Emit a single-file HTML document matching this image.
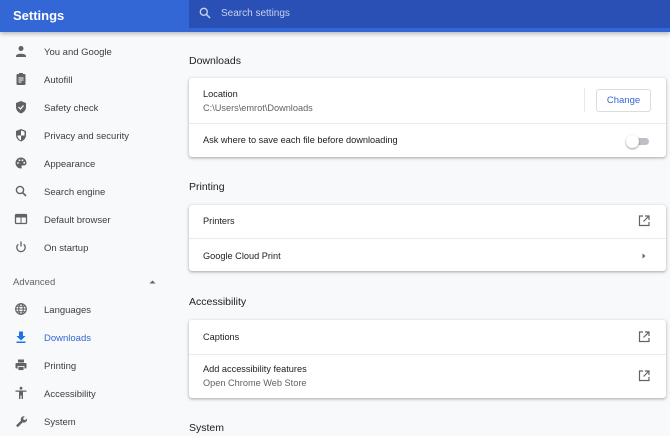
<!DOCTYPE html>
<html><head><style>
*{margin:0;padding:0;box-sizing:border-box}
body{width:670px;height:436px;overflow:hidden;background:#f8f9fa;font-family:"Liberation Sans",sans-serif;position:relative;color:#202124}
.hdr{position:absolute;left:0;top:0;width:670px;height:32px;background:#3367d6;box-shadow:0 2px 4px rgba(0,0,0,.25)}
.hdr .t{position:absolute;left:13px;top:8px;color:#fff;font-size:13px;font-weight:bold}
.search{position:absolute;left:189px;top:0;width:481px;height:28px;background:#2a4fb5;}
.search span{position:absolute;left:32px;top:8px;color:#c5d2f0;font-size:10px}
.nav{position:absolute;left:0;font-size:9.5px;color:#3c4043}
.nav .ic{position:absolute;left:14px;top:-3px;width:14px;height:14px}
.nav .lb{position:absolute;left:44px;top:0;white-space:nowrap}
.h{position:absolute;left:189px;font-size:10.5px;color:#202124}
.card{position:absolute;left:189px;width:477px;background:#fff;border-radius:3px;box-shadow:0 1px 2px rgba(60,64,67,.3),0 1px 3px 1px rgba(60,64,67,.12)}
.row{position:absolute;left:14px;font-size:9.2px;color:#202124}
.sub{color:#5f6368;font-size:9.2px;margin-top:4px}
.sep{position:absolute;left:0;width:477px;height:1px;background:#e8eaed}
svg{display:block}
</style></head><body>
<div class="hdr"><div class="t">Settings</div>
<div class="search"><svg style="position:absolute;left:10px;top:7px" width="12" height="12" viewBox="0 0 12 12"><circle cx="4.8" cy="4.8" r="3.5" fill="none" stroke="#c5d2f0" stroke-width="1.4"/><path d="M7.4 7.4L11 11" stroke="#c5d2f0" stroke-width="1.5"/></svg><span>Search settings</span></div></div>

<div class="nav" style="top:47px"><svg class="ic" viewBox="0 0 14 14"><circle cx="7" cy="4.5" r="2.5" fill="#5f6368"/><path d="M2 12c0-3 10-3 10 0v1H2z" fill="#5f6368"/></svg><span class="lb">You and Google</span></div>
<div class="nav" style="top:75px"><svg class="ic" viewBox="0 0 14 14"><rect x="2.5" y="2" width="9" height="11" rx="1" fill="#5f6368"/><rect x="5" y="1" width="4" height="2" fill="#5f6368"/><path d="M4.5 6h5M4.5 8h5M4.5 10h3" stroke="#fff" stroke-width="1"/></svg><span class="lb">Autofill</span></div>
<div class="nav" style="top:103px"><svg class="ic" viewBox="0 0 14 14"><path d="M7 1l5 2v4c0 3-2 5.5-5 6.5C4 12.5 2 10 2 7V3z" fill="#5f6368"/><path d="M4.5 7l2 2 3-3.5" stroke="#fff" stroke-width="1.2" fill="none"/></svg><span class="lb">Safety check</span></div>
<div class="nav" style="top:131px"><svg class="ic" viewBox="0 0 14 14"><path d="M7 1l5 2v4c0 3-2 5.5-5 6.5C4 12.5 2 10 2 7V3z" fill="#5f6368"/><path d="M7 2.5v5H3.5c0 2 1.5 4 3.5 4.8V7.5h3.5V3.8z" fill="#fff"/></svg><span class="lb">Privacy and security</span></div>
<div class="nav" style="top:159px"><svg class="ic" viewBox="0 0 14 14"><path d="M7 1.5a5.5 5.5 0 000 11c1 0 1-1 .5-1.5s0-1.5 1-1.5H10a2.5 2.5 0 002.5-2.5C12.5 4 10 1.5 7 1.5z" fill="#5f6368"/><circle cx="4" cy="7" r=".9" fill="#fff"/><circle cx="5.5" cy="4.3" r=".9" fill="#fff"/><circle cx="8.5" cy="4.3" r=".9" fill="#fff"/><circle cx="10.2" cy="6.8" r=".9" fill="#fff"/></svg><span class="lb">Appearance</span></div>
<div class="nav" style="top:187px"><svg class="ic" viewBox="0 0 14 14"><circle cx="6" cy="6" r="3.6" fill="none" stroke="#5f6368" stroke-width="1.4"/><path d="M8.6 8.6L12 12" stroke="#5f6368" stroke-width="1.6"/></svg><span class="lb">Search engine</span></div>
<div class="nav" style="top:215px"><svg class="ic" viewBox="0 0 14 14"><rect x="1.5" y="2.5" width="11" height="9" rx="1" fill="none" stroke="#5f6368" stroke-width="1.3"/><rect x="1.5" y="2.5" width="11" height="3" fill="#5f6368"/><path d="M7 5.5v6" stroke="#5f6368"/></svg><span class="lb">Default browser</span></div>
<div class="nav" style="top:243px"><svg class="ic" viewBox="0 0 14 14"><path d="M4.3 4.2a4.2 4.2 0 105.4 0" fill="none" stroke="#5f6368" stroke-width="1.3"/><path d="M7 1.5v5" stroke="#5f6368" stroke-width="1.3"/></svg><span class="lb">On startup</span></div>
<div class="nav" style="top:277px;left:13px;color:#5f6368;font-size:9.5px">Advanced</div>
<svg style="position:absolute;left:149px;top:280px" width="7" height="4" viewBox="0 0 7 4"><path d="M0.5 3.5L3.5 0.5 6.5 3.5z" fill="#5f6368"/></svg>
<div class="nav" style="top:305px"><svg class="ic" viewBox="0 0 14 14"><circle cx="7" cy="7" r="5.3" fill="none" stroke="#5f6368" stroke-width="1.2"/><ellipse cx="7" cy="7" rx="2.3" ry="5.3" fill="none" stroke="#5f6368" stroke-width="1.1"/><path d="M1.7 7h10.6M2.5 4.3h9M2.5 9.7h9" stroke="#5f6368" stroke-width="1"/></svg><span class="lb">Languages</span></div>
<div class="nav" style="top:333px;color:#1a73e8"><svg class="ic" viewBox="0 0 14 14"><path d="M5 1.5h4v4.5h2.5L7 10.5 2.5 6H5z" fill="#1a73e8"/><rect x="2.5" y="11.5" width="9" height="1.5" fill="#1a73e8"/></svg><span class="lb" style="color:#3367d6">Downloads</span></div>
<div class="nav" style="top:361px"><svg class="ic" viewBox="0 0 14 14"><rect x="4" y="1.5" width="6" height="3" fill="#5f6368"/><rect x="1.5" y="5" width="11" height="5.5" rx="1" fill="#5f6368"/><rect x="4" y="8.5" width="6" height="4" fill="#5f6368" stroke="#fff" stroke-width=".8"/></svg><span class="lb">Printing</span></div>
<div class="nav" style="top:389px"><svg class="ic" viewBox="0 0 14 14"><circle cx="7" cy="2.2" r="1.4" fill="#5f6368"/><path d="M1.5 4.5h11v1.3H9V13H7.6V9.5H6.4V13H5V5.8H1.5z" fill="#5f6368"/></svg><span class="lb">Accessibility</span></div>
<div class="nav" style="top:417px"><svg class="ic" viewBox="0 0 14 14"><path d="M2 11.5l5-5a3 3 0 013.8-4L9 4.3l.7 1.3 1.3.7 1.8-1.8a3 3 0 01-4 3.8l-5 5z" fill="#5f6368"/></svg><span class="lb">System</span></div>

<div class="h" style="top:55px">Downloads</div>
<div class="card" style="top:78px;height:79px">
<div class="row" style="top:11px">Location<div class="sub">C:\Users\emrot\Downloads</div></div>
<div style="position:absolute;left:395px;top:10px;width:1px;height:24px;background:#e8eaed"></div>
<div style="position:absolute;left:407px;top:11px;width:55px;height:23px;border:1px solid #dadce0;border-radius:3px;color:#3367d6;font-size:9.5px;text-align:center;line-height:21px">Change</div>
<div class="sep" style="top:45px"></div>
<div class="row" style="top:57px">Ask where to save each file before downloading</div>
<div style="position:absolute;left:440px;top:60px;width:20px;height:7px;border-radius:4px;background:#bdc1c6"></div>
<div style="position:absolute;left:437px;top:57px;width:13px;height:13px;border-radius:50%;background:#fff;box-shadow:0 1px 2px rgba(0,0,0,.4)"></div>
</div>

<div class="h" style="top:181px">Printing</div>
<div class="card" style="top:205px;height:66px">
<div class="row" style="top:11px">Printers</div>
<svg style="position:absolute;left:449px;top:10px" width="12" height="12" viewBox="0 0 12 12"><path d="M5 1H1.5v9.5H11V7" fill="none" stroke="#5f6368" stroke-width="1.2"/><path d="M7 1h4v4M11 1L5.5 6.5" fill="none" stroke="#5f6368" stroke-width="1.2"/></svg>
<div class="sep" style="top:33px"></div>
<div class="row" style="top:46px">Google Cloud Print</div>
<svg style="position:absolute;left:453px;top:48px" width="4" height="6" viewBox="0 0 4 6"><path d="M0.5 0.5L3.5 3 0.5 5.5z" fill="#5f6368"/></svg>
</div>

<div class="h" style="top:296px">Accessibility</div>
<div class="card" style="top:320px;height:78px">
<div class="row" style="top:12px">Captions</div>
<svg style="position:absolute;left:449px;top:11px" width="12" height="12" viewBox="0 0 12 12"><path d="M5 1H1.5v9.5H11V7" fill="none" stroke="#5f6368" stroke-width="1.2"/><path d="M7 1h4v4M11 1L5.5 6.5" fill="none" stroke="#5f6368" stroke-width="1.2"/></svg>
<div class="sep" style="top:34px"></div>
<div class="row" style="top:44px">Add accessibility features<div class="sub">Open Chrome Web Store</div></div>
<svg style="position:absolute;left:449px;top:50px" width="12" height="12" viewBox="0 0 12 12"><path d="M5 1H1.5v9.5H11V7" fill="none" stroke="#5f6368" stroke-width="1.2"/><path d="M7 1h4v4M11 1L5.5 6.5" fill="none" stroke="#5f6368" stroke-width="1.2"/></svg>
</div>

<div class="h" style="top:422px">System</div>
</body></html>
